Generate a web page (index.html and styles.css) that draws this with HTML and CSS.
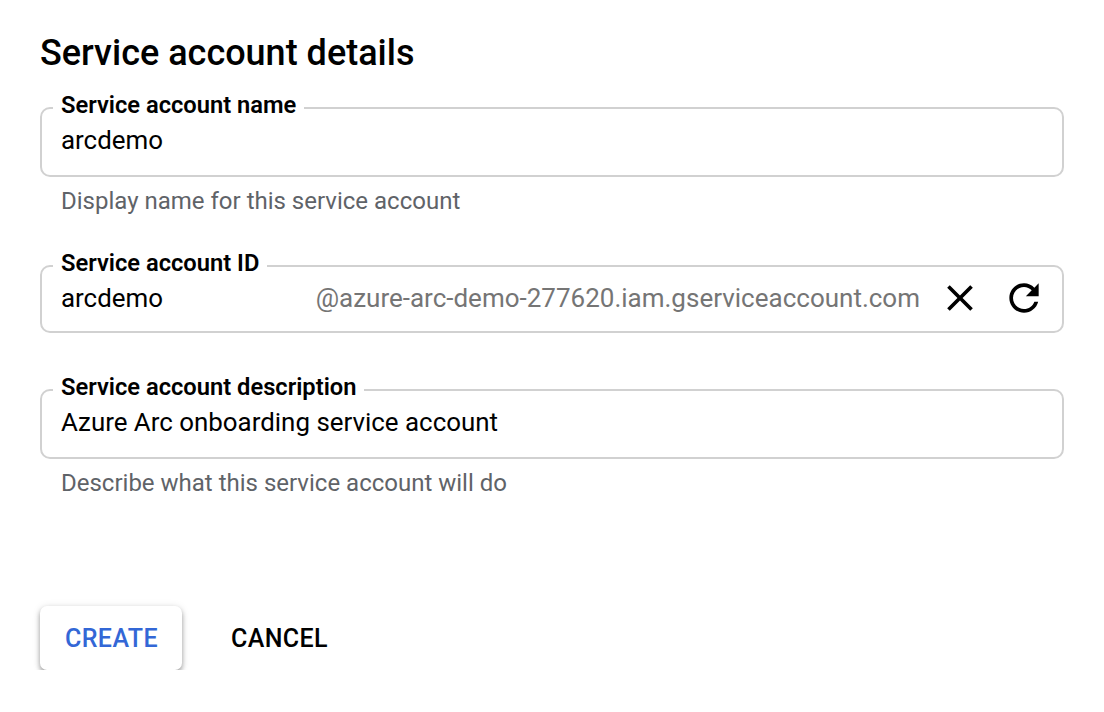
FILE: index.html
```html
<!DOCTYPE html>
<html lang="en">
<head>
<meta charset="utf-8">
<title>Service account details</title>
<link rel="stylesheet" href="styles.css">
</head>
<body>
<main class="page">
  <h1 class="title">Service account details</h1>

  <div class="group">
    <fieldset class="field">
      <legend class="label">Service account name</legend>
      <div class="row"><span class="value">arcdemo</span></div>
    </fieldset>
    <div class="hint">Display name for this service account</div>
  </div>

  <div class="group no-hint">
    <fieldset class="field field-id">
      <legend class="label">Service account ID</legend>
      <div class="row">
        <span class="value">arcdemo</span>
        <span class="suffix">@azure-arc-demo-277620.iam.gserviceaccount.com</span>
        <span class="icon icon-close">
          <svg viewBox="0 0 24 24" width="44" height="44"><path d="M19 6.41L17.59 5 12 10.59 6.41 5 5 6.41 10.59 12 5 17.59 6.41 19 12 13.41 17.59 19 19 17.59 13.41 12z"/></svg>
        </span>
        <span class="icon icon-refresh">
          <svg viewBox="0 0 24 24" width="44" height="44"><path d="M17.65 6.35C16.2 4.9 14.21 4 12 4c-4.42 0-7.99 3.58-7.99 8s3.57 8 7.99 8c3.73 0 6.84-2.55 7.73-6h-2.08c-.82 2.33-3.04 4-5.65 4-3.31 0-6-2.69-6-6s2.69-6 6-6c1.66 0 3.14.69 4.22 1.78L13 11h7V4l-2.35 2.35z"/></svg>
        </span>
      </div>
    </fieldset>
  </div>

  <div class="group">
    <fieldset class="field">
      <legend class="label">Service account description</legend>
      <div class="row"><span class="value">Azure Arc onboarding service account</span></div>
    </fieldset>
    <div class="hint">Describe what this service account will do</div>
  </div>

  <div class="actions">
    <button class="btn btn-raised" type="button">CREATE</button>
    <button class="btn btn-flat" type="button">CANCEL</button>
  </div>
</main>
</body>
</html>
```

FILE: styles.css
```css
html, body {
  margin: 0;
  padding: 0;
  background: #ffffff;
}

body {
  font-family: Roboto, "Liberation Sans", Arial, sans-serif;
  color: #000000;
}

.page {
  width: 1024px;
  padding: 31px 0 0 40px;
}

.title {
  margin: 0 0 18px;
  font-size: 36px;
  line-height: 44px;
  font-weight: 500;
  color: #000000;
}

.group {
  margin-bottom: 34px;
}

.group.no-hint {
  margin-bottom: 42px;
}

.field {
  margin: 0;
  padding: 0 16px 18px 11px;
  border: 2px solid #d1d1d1;
  border-radius: 10px;
  min-width: 0;
}

.field-id {
  padding-bottom: 16px;
}

.label {
  padding: 0 8px 6px;
  font-size: 23.7px;
  line-height: 24px;
  font-weight: 600;
  color: #000000;
}

.row {
  display: flex;
  align-items: center;
  height: 34px;
  padding-left: 8px;
}

.value {
  flex: 1;
  font-size: 25.9px;
  line-height: 34px;
  color: #000000;
  white-space: nowrap;
}

.suffix {
  font-size: 26px;
  line-height: 34px;
  color: #757575;
  white-space: nowrap;
}

.icon {
  display: flex;
  flex: none;
  width: 44px;
  height: 44px;
  fill: #000000;
}

.icon-close {
  margin-left: 18px;
}

.icon-refresh {
  margin-left: 20px;
}

.hint {
  margin-top: 8px;
  padding-left: 21px;
  font-size: 24px;
  line-height: 32px;
  color: #5f6368;
}

.actions {
  display: flex;
  align-items: center;
  gap: 24px;
  margin-top: 107px;
}

.btn {
  height: 64px;
  padding: 0 25px;
  border: none;
  border-radius: 7px;
  font-family: Roboto, "Liberation Sans", Arial, sans-serif;
  font-size: 25px;
  font-weight: 500;
  letter-spacing: 0.4px;
  background: transparent;
  cursor: pointer;
}

.btn-raised {
  width: 142px;
  background: #ffffff;
  color: #3367d6;
  box-shadow: 0 3px 5px rgba(0, 0, 0, 0.35), 0 1px 8px rgba(0, 0, 0, 0.1);
}

.btn-flat {
  color: #000000;
}
```
